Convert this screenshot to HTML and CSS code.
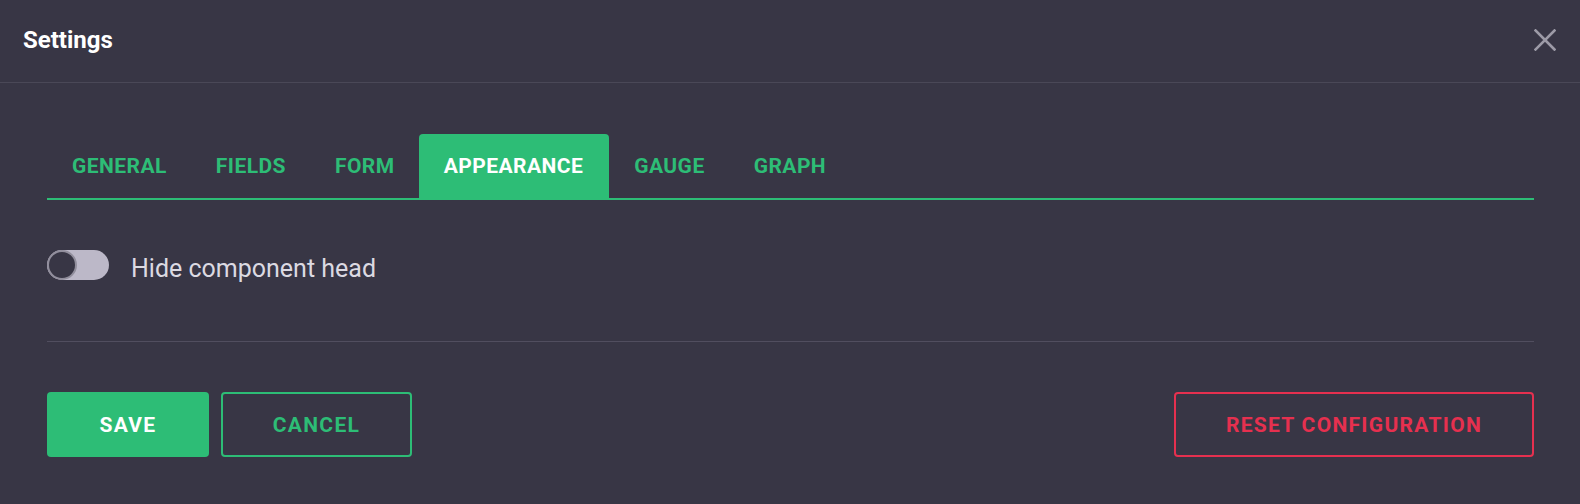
FILE: index.html
```html
<!DOCTYPE html>
<html>
<head>
<meta charset="utf-8">
<link rel="stylesheet" href="styles.css">
</head>
<body>
<div class="dialog">
  <header class="head">
    <h1 class="title">Settings</h1>
    <button class="close" aria-label="Close">
      <svg width="22" height="22" viewBox="0 0 22 22"><path d="M1.5 1.5 L20.5 20.5 M20.5 1.5 L1.5 20.5" stroke="currentColor" stroke-width="2.6" stroke-linecap="square"/></svg>
    </button>
  </header>
  <main class="body">
    <nav class="tabs">
      <div class="tab">General</div>
      <div class="tab">Fields</div>
      <div class="tab">Form</div>
      <div class="tab active">Appearance</div>
      <div class="tab">Gauge</div>
      <div class="tab">Graph</div>
    </nav>
    <div class="option">
      <span class="toggle"><span class="knob"></span></span>
      <span class="label">Hide component head</span>
    </div>
    <hr class="divider">
    <div class="actions">
      <div class="left">
        <button class="btn primary">Save</button>
        <button class="btn outline">Cancel</button>
      </div>
      <button class="btn danger">Reset configuration</button>
    </div>
  </main>
</div>
</body>
</html>
```
FILE: styles.css
```css
* { box-sizing: border-box; }
html, body {
  margin: 0;
  padding: 0;
  background: #383645;
  font-family: Roboto, "Liberation Sans", Arial, sans-serif;
}
.dialog {
  width: 1580px;
  height: 504px;
  background: #383645;
}
.head {
  height: 83px;
  display: flex;
  align-items: center;
  justify-content: space-between;
  padding: 0 24px 0 23px;
  border-bottom: 1px solid #4a4857;
}
.title {
  margin: 0;
  font-size: 24px;
  font-weight: 700;
  color: #ffffff;
  padding-bottom: 3px;
}
.close {
  background: none;
  border: 0;
  padding: 0;
  color: #9d9ba7;
  width: 22px;
  height: 22px;
  display: flex;
  margin-bottom: 3px;
}
.body {
  padding: 51px 46px 0 47px;
}
.tabs {
  display: flex;
  border-bottom: 2px solid #2dbd76;
}
.tab {
  height: 64px;
  padding: 0 24px 0 25px;
  display: flex;
  align-items: center;
  font-size: 21px;
  font-weight: 700;
  letter-spacing: 0.45px;
  text-transform: uppercase;
  color: #2dbd76;
  border-radius: 4px 4px 0 0;
}
.tab.active {
  background: #2dbd76;
  color: #ffffff;
  padding-right: 26px;
}
.option {
  margin-top: 50px;
  height: 30px;
  display: flex;
  align-items: center;
}
.toggle {
  position: relative;
  width: 62px;
  height: 30px;
  border-radius: 15px;
  background: #bcb8c8;
  display: inline-block;
}
.knob {
  position: absolute;
  left: 0;
  top: 0;
  width: 30px;
  height: 30px;
  border-radius: 50%;
  background: #383645;
  border: 2.5px solid #918e9c;
}
.label {
  margin-left: 22px;
  font-size: 25px;
  color: #dcdae2;
  padding-top: 6px;
}
.divider {
  margin: 61px 0 0 0;
  border: 0;
  height: 1px;
  background: #514e5f;
}
.actions {
  margin-top: 50px;
  display: flex;
  justify-content: space-between;
}
.left {
  display: flex;
  gap: 12px;
}
.btn {
  height: 65px;
  font-family: Roboto, "Liberation Sans", Arial, sans-serif;
  font-size: 21px;
  font-weight: 700;
  text-transform: uppercase;
  letter-spacing: 1.3px;
  border-radius: 4px;
  padding: 0;
  cursor: pointer;
}
.primary {
  width: 162px;
  background: #2dbd76;
  color: #ffffff;
  border: 0;
}
.outline {
  width: 191px;
  background: transparent;
  color: #2dbd76;
  border: 2px solid #2dbd76;
}
.danger {
  width: 360px;
  background: transparent;
  color: #e6304f;
  border: 2px solid #e6304f;
}
```
